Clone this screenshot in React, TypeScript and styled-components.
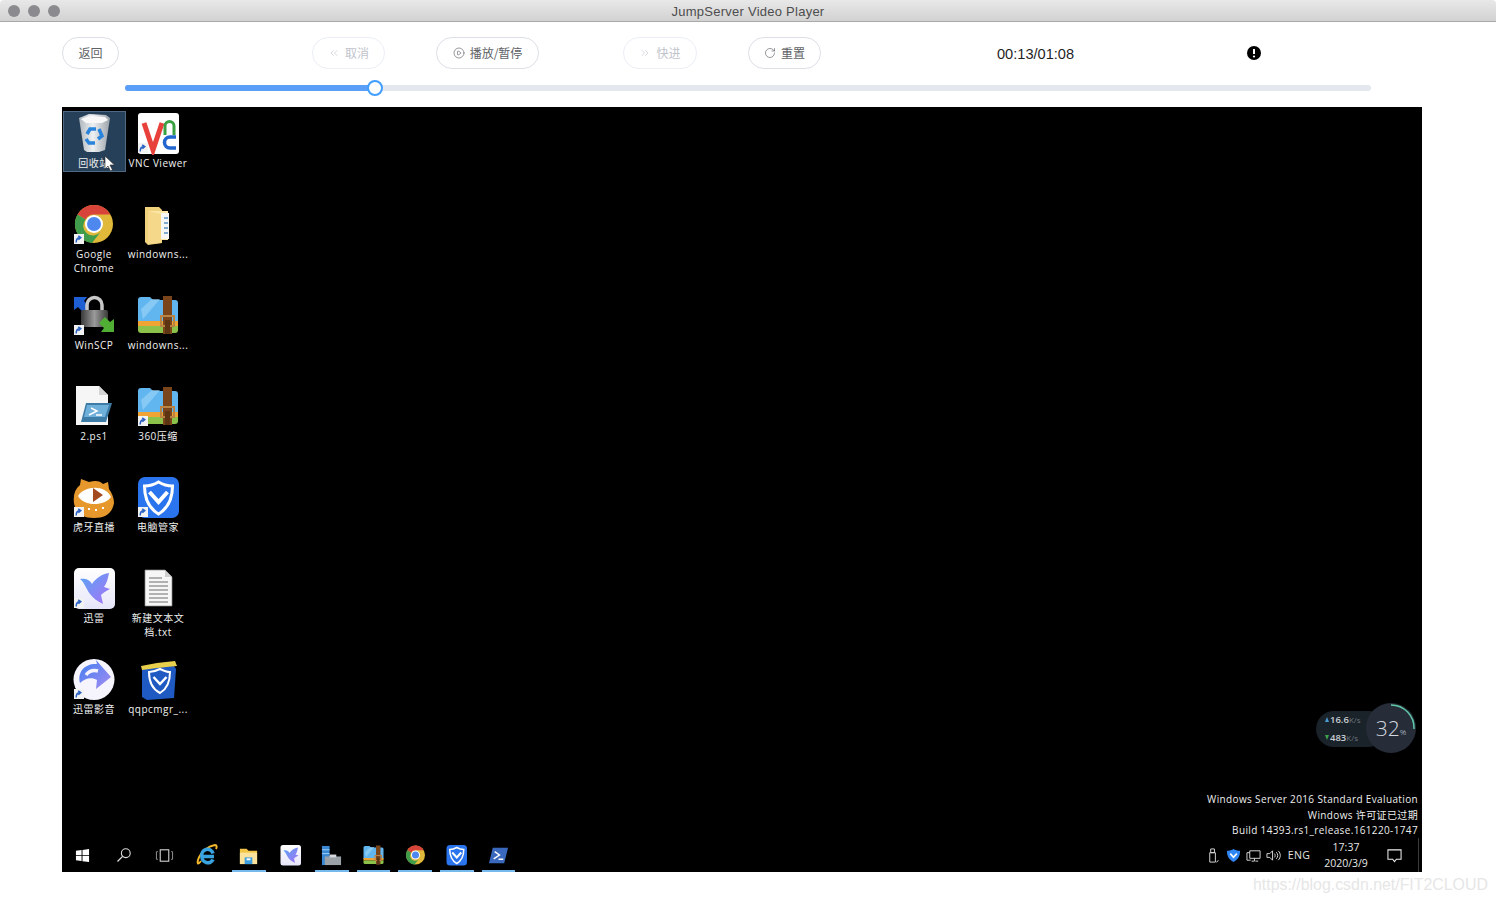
import React from "react";
import styled, { createGlobalStyle } from "styled-components";
import { ChevronsLeft, ChevronsRight, CirclePlay, RotateCw } from "lucide-react";

const Global = createGlobalStyle`
  html, body { margin: 0; padding: 0; background: #fff; }
  body { font-family: "Liberation Sans", "Noto Sans CJK SC", sans-serif; overflow: hidden; }
`;

const Page = styled.div`
  position: relative;
  width: 1496px;
  height: 903px;
  background: #fff;
  overflow: hidden;
`;
const TitleBar = styled.header`
  display: flex;
  align-items: center;
  justify-content: center;
  position: relative;
  height: 21px;
  background: linear-gradient(#e8e8e8, #d2d2d2);
  border-bottom: 1px solid #a9a9a9;
  border-radius: 4px 4px 0 0;
`;
const Lights = styled.div`
  position: absolute;
  left: 8px;
  top: 5px;
  display: flex;
  gap: 8px;
`;
const Light = styled.span`
  width: 12px;
  height: 12px;
  border-radius: 50%;
  background: #8b8b8f;
`;
const WindowTitle = styled.div`
  padding-top: 1px;
  font-size: 13px;
  letter-spacing: 0.25px;
  color: #4d4d4d;
`;
const Toolbar = styled.div`
  display: flex;
  align-items: center;
  height: 32px;
  margin-top: 15px;
  padding-left: 62px;
`;
const RoundButton = styled.button<{ $gap: number; $w: number }>`
  display: flex;
  align-items: center;
  justify-content: center;
  gap: 5px;
  box-sizing: border-box;
  width: ${(p) => p.$w}px;
  height: 32px;
  margin-left: ${(p) => p.$gap}px;
  padding: 0 0 1px;
  background: #fff;
  border: 1px solid ${(p) => (p.disabled ? "#ebeef5" : "#dcdfe6")};
  border-radius: 16px;
  color: ${(p) => (p.disabled ? "#c0c4cc" : "#606266")};
  font: 12px/14px "Noto Sans CJK SC", sans-serif;
`;
const TimeText = styled.div`
  margin-left: 176px;
  width: 78px;
  padding-top: 2px;
  font: 14.6px "Liberation Sans", sans-serif;
  white-space: nowrap;
  color: #1f1f1f;
`;
const Alert = styled.svg`
  width: 14px;
  height: 14px;
  margin-left: 172px;
`;
const SliderRow = styled.div`
  position: relative;
  width: 1246px;
  height: 6px;
  margin: 16px 0 16px 125px;
  background: #e4e7ed;
  border-radius: 3px;
`;
const SliderFill = styled.div`
  height: 100%;
  background: #5a9ef8;
  border-radius: 3px 0 0 3px;
`;
const SliderThumb = styled.div`
  position: absolute;
  top: -5px;
  width: 16px;
  height: 16px;
  box-sizing: border-box;
  margin-left: -8px;
  background: #fff;
  border: 2px solid #409eff;
  border-radius: 50%;
`;
const Desktop = styled.main`
  position: relative;
  display: flex;
  flex-direction: column;
  width: 1360px;
  height: 765px;
  margin-left: 62px;
  background: #000;
  color: #f2f2f2;
  overflow: hidden;
`;
const IconGrid = styled.div`
  flex: 1;
  display: grid;
  grid-template-columns: repeat(2, 64px);
  grid-auto-rows: 91px;
  align-content: start;
  padding-top: 6px;
`;
const DesktopItem = styled.div<{ $selected?: boolean }>`
  position: relative;
  display: flex;
  flex-direction: column;
  align-items: center;
  &::before {
    content: "";
    display: ${(p) => (p.$selected ? "block" : "none")};
    position: absolute;
    left: 1px;
    right: 0;
    top: -2px;
    height: 61px;
    box-sizing: border-box;
    background: #26405a;
    border: 1px solid #4f6a82;
  }
`;
const IconBox = styled.div`
  position: relative;
  width: 42px;
  height: 42px;
  svg { display: block; width: 100%; height: 100%; }
`;
const ItemLabel = styled.div`
  position: relative;
  margin-top: 1px;
  width: 64px;
  text-align: center;
  font: 10px/14px "Open Sans", "Noto Sans CJK SC", sans-serif;
  letter-spacing: 0.5px;
  color: #f0f0f0;
  white-space: pre-line;
`;
const Cursor = styled.svg`
  position: absolute;
  left: 42px;
  top: 42px;
  width: 12px;
  height: 17px;
`;
const Widget = styled.div`
  position: absolute;
  right: 6px;
  top: 596px;
  width: 100px;
  height: 50px;
`;
const WidgetPill = styled.div`
  position: absolute;
  left: 0;
  top: 8px;
  width: 70px;
  height: 36px;
  border-radius: 18px;
  background: #1a222a;
  display: flex;
  flex-direction: column;
  justify-content: space-around;
  padding: 0 0 0 9px;
  box-sizing: border-box;
`;
const Rate = styled.div<{ $c: string }>`
  font: 600 9.5px/12px "Open Sans", sans-serif;
  color: #c9ced3;
  white-space: nowrap;
  &::before {
    content: "";
    display: inline-block;
    vertical-align: 1px;
    margin-right: 1px;
    border-left: 2.5px solid transparent;
    border-right: 2.5px solid transparent;
    ${(p) => (p.$c === "up" ? "border-bottom: 5px solid #4a9bd0;" : "border-top: 5px solid #3da24b;")}
  }
  small { font-size: 8px; font-weight: 400; color: #6c747c; }
`;
const WidgetDial = styled.div`
  position: absolute;
  right: 0;
  top: 0;
  width: 50px;
  height: 50px;
  border-radius: 50%;
  background: #262d38;
  display: flex;
  align-items: center;
  justify-content: center;
  font: 300 21px "Open Sans", sans-serif;
  color: #d5dae0;
  svg { position: absolute; inset: 0; width: 50px; height: 50px; }
  small { font-size: 8px; margin-top: 7px; }
`;
const License = styled.div`
  position: absolute;
  right: 4px;
  bottom: 33px;
  text-align: right;
  font: 10px/15.7px "Open Sans", "Noto Sans CJK SC", sans-serif;
  letter-spacing: 0.36px;
  color: #eeeeee;
`;
const Taskbar = styled.footer`
  display: flex;
  align-items: stretch;
  height: 34px;
  background: #000;
`;
const Slot = styled.div<{ $active?: boolean; $size?: number; $w?: number }>`
  position: relative;
  display: flex;
  align-items: center;
  justify-content: center;
  width: ${(p) => p.$w ?? 41.6}px;
  svg { display: block; width: ${(p) => p.$size ?? 21}px; height: ${(p) => p.$size ?? 21}px; }
  &::after {
    content: "";
    display: ${(p) => (p.$active ? "block" : "none")};
    position: absolute;
    left: 4px;
    right: 4px;
    bottom: 0;
    height: 2px;
    background: #76b9ed;
  }
`;
const Tray = styled.div`
  margin-left: auto;
  display: flex;
  align-items: center;
  padding-right: 3px;
`;
const TrayIcon = styled.div`
  display: flex;
  justify-content: center;
  width: 20.2px;
  svg { display: block; width: 15px; height: 15px; }
`;
const Lang = styled.div`
  width: 30px;
  text-align: center;
  font: 10.5px "Open Sans", sans-serif;
  letter-spacing: 0.3px;
  color: #e4e4e4;
`;
const Clock = styled.div`
  width: 64px;
  text-align: center;
  font: 10.5px/16px "Open Sans", sans-serif;
  color: #e8e8e8;
`;
const NotifySlot = styled.div`
  display: flex;
  justify-content: center;
  width: 32px;
  svg { width: 15px; height: 15px; }
`;
const TrayDivider = styled.div`
  width: 1px;
  height: 34px;
  margin-left: 8px;
  background: #3c3c3c;
`;
const Watermark = styled.div`
  position: absolute;
  left: 1253px;
  top: 875px;
  font: 15.9px/20px "Liberation Sans", sans-serif;
  color: #e6e6e6;
  white-space: nowrap;
`;

const Shortcut = () => (
  <g>
    <rect x="1" y="30" width="10" height="10" fill="#f2f2f2" />
    <path d="M3.2 38.5c0-3 1.2-4.7 3.6-4.9M5.2 31.8l2.6 1.8-2.4 2.2" stroke="#2b62c4" strokeWidth="1.5" fill="none" />
  </g>
);
const RecycleIcon = () => (
  <svg viewBox="0 0 42 42">
    <defs>
      <linearGradient id="rb" x1="0" x2="1" y1="0" y2="0">
        <stop offset="0" stopColor="#aeb6bc" />
        <stop offset=".45" stopColor="#eef1f3" />
        <stop offset="1" stopColor="#9aa1a8" />
      </linearGradient>
    </defs>
    <path d="M6 5l10-4 17 1 4 3-5 32-6 2H14l-3-2z" fill="url(#rb)" />
    <path d="M8 6l8-3 16 1 3 3-6 3-16 0z" fill="#f8f8f8" />
    <path d="M14 21l3-5 6 0M26 16l3 7-4 3M22 30h-6l-3-4" stroke="#2a84dc" strokeWidth="3.500" fill="none" />
  </svg>
);
const VncIcon = () => (
  <svg viewBox="0 0 42 42">
    <rect x="1" width="41" height="41" rx="3" fill="#fff" />
    <path d="M7 10l9 27 9-27" stroke="#e8403a" strokeWidth="5" fill="none" />
    <path d="M28 22v-9a4.500 4.500 0 0 1 9 0v9" stroke="#3aa043" strokeWidth="3" fill="none" />
    <path d="M39 24h-6a5.500 5.500 0 0 0 0 11h6" stroke="#2266d0" strokeWidth="3.500" fill="none" />
    <Shortcut />
  </svg>
);
const ChromeIcon = ({ short = true }: { short?: boolean }) => (
  <svg viewBox="0 0 42 42">
    <circle cx="21" cy="20" r="19" fill="#e0b93a" />
    <path d="M4.500 10.500A19 19 0 0 1 37.500 10.500H21a9.500 9.500 0 0 0-8.500 5z" fill="#d8443a" />
    <path d="M4.500 10.500A19 19 0 0 0 19 39l8.500-11a9.500 9.500 0 0 1-15-12.500z" fill="#3f9c4a" />
    <circle cx="21" cy="20" r="9" fill="#fff" />
    <circle cx="21" cy="20" r="7" fill="#4e88ee" />
    {short && <Shortcut />}
  </svg>
);
const FolderIcon = () => (
  <svg viewBox="0 0 42 42">
    <path d="M8 3h14l3 3v33l-14 2-3-3z" fill="#f0d27c" />
    <path d="M11 7h20v29H11z" fill="#fbe7a5" />
    <path d="M24 9h8v26h-8z" fill="#f6f6f4" />
    <path d="M27 14h4M27 19h4M27 24h4M27 29h4" stroke="#7fa9cf" strokeWidth="2" />
    <path d="M11 7l13 3v29l-13 1z" fill="#f5d88a" />
  </svg>
);
const ScpIcon = () => (
  <svg viewBox="0 0 42 42">
    <defs>
      <linearGradient id="lk" x1="0" x2="1" y1="0" y2="0">
        <stop offset="0" stopColor="#3a3a3a" />
        <stop offset=".5" stopColor="#9a9a9a" />
        <stop offset="1" stopColor="#3a3a3a" />
      </linearGradient>
    </defs>
    <path d="M1 2h13l-3 4 5 5-6 6-5-5-4 3z" fill="#1f5fd4" />
    <path d="M14 15v-5a7.500 7.500 0 0 1 15 0v5" stroke="#c8c8c8" strokeWidth="3.500" fill="none" />
    <rect x="8" y="15" width="27" height="17" rx="2" fill="url(#lk)" />
    <path d="M41 37H28l3-4-5-5 6-6 5 5 4-3z" fill="#4fae33" />
    <Shortcut />
  </svg>
);
const RarIcon = ({ short }: { short?: boolean }) => (
  <svg viewBox="0 0 42 42">
    <path d="M1 5a3 3 0 0 1 3-3h9l3 3h22a3 3 0 0 1 3 3v20H1z" fill="#62b6ef" />
    <path d="M4 14l11-10h8L6 24z" fill="#96d1f6" opacity=".7" />
    <path d="M1 26h40v5H1z" fill="#f0a434" />
    <path d="M1 31h40v4a3 3 0 0 1-3 3H4a3 3 0 0 1-3-3z" fill="#8cc24a" />
    <rect x="26" y="1" width="9" height="38" fill="#7a451a" />
    <rect x="24" y="21" width="13" height="10" fill="none" stroke="#b98344" strokeWidth="2" />
    <rect x="28" y="25" width="5" height="14" fill="#5d3412" />
    {short && <Shortcut />}
  </svg>
);
const PsFileIcon = () => (
  <svg viewBox="0 0 42 42">
    <path d="M3 0h23l9 9v30H3z" fill="#f6f6f6" />
    <path d="M26 0v9h9z" fill="#d4d4d4" />
    <path d="M13 17h26l-6 19H8z" fill="#3e7ca8" />
    <path d="M14 19h22l-4 12H11z" fill="#6fb0da" />
    <path d="M18 22l6 3-8 4M23 29h6" stroke="#fff" strokeWidth="1.500" fill="none" />
  </svg>
);
const HuyaIcon = () => (
  <svg viewBox="0 0 42 42">
    <path d="M1 26c-1-8 1-14 6-18l1-6 8 3c7-2 11-1 14 2l5-2 1 7c3 4 5 9 5 14-2 11-9 15-20 15-11 0-18-4-20-15z" fill="#e7982c" />
    <path d="M5 19c6-10 27-12 33 1-6 9-27 10-33-1z" fill="#fff" />
    <path d="M20 11l10 7-10 7z" fill="#a34a1e" />
    <path d="M15 32h2M22 33h2M29 31h2" stroke="#fff" strokeWidth="2" fill="none" />
    <Shortcut />
  </svg>
);
const ShieldIcon = ({ short = true }: { short?: boolean }) => (
  <svg viewBox="0 0 42 42">
    <rect x="1" width="41" height="41" rx="7" fill="#2a74ee" />
    <path d="M21.500 5c5 3 9 4 14 4 0 13-4 22-14 28-10-6-14-15-14-28 5 0 9-1 14-4z" stroke="#fff" strokeWidth="3" fill="none" />
    <path d="M12.500 15l9 10 9-10" stroke="#fff" strokeWidth="4" fill="none" />
    {short && <Shortcut />}
  </svg>
);
const BirdIcon = ({ short = true }: { short?: boolean }) => (
  <svg viewBox="0 0 42 42">
    <defs>
      <linearGradient id="bd" x1="0" x2="1" y1="0" y2="1">
        <stop offset="0" stopColor="#58a6f4" />
        <stop offset="1" stopColor="#a772f6" />
      </linearGradient>
      <linearGradient id="bg" x1="0" x2="0" y1="0" y2="1">
        <stop offset="0" stopColor="#fff" />
        <stop offset="1" stopColor="#e6e6fa" />
      </linearGradient>
    </defs>
    <rect x="1" width="41" height="41" rx="5" fill="url(#bg)" />
    <path d="M7 11c6-1 10 1 12 5 4-6 10-10 17-11-1 5-2 10-5 14l6 2c-4 2-7 4-9 6l2 9c-6-3-10-6-13-10-4-5-5-11-10-15z" fill="url(#bd)" />
    {short && <Shortcut />}
  </svg>
);
const TextFileIcon = () => (
  <svg viewBox="0 0 42 42">
    <path d="M8 2h20l7 7v29H8z" fill="#f6f6f6" stroke="#8a8a8a" strokeWidth=".7" />
    <path d="M28 2v7h7z" fill="#cfcfcf" />
    <path d="M12 10h13M12 14h19M12 18h19M12 22h19M12 26h19M12 30h19M12 34h19" stroke="#9a9a9a" strokeWidth="1.400" />
  </svg>
);
const PlayerIcon = () => (
  <svg viewBox="0 0 42 42">
    <defs>
      <linearGradient id="pl" x1="0" x2="1" y1="0" y2="1">
        <stop offset="0" stopColor="#3f7df0" />
        <stop offset="1" stopColor="#a58df2" />
      </linearGradient>
    </defs>
    <circle cx="21" cy="20.500" r="20.500" fill="#f6f4fd" />
    <path d="M7 24C4 12 13 4 24 5L23 1l15 17-15 12 1-9c-5-3-12-2-17 3z" fill="url(#pl)" />
    <path d="M13 16c3-4 8-5 12-4" stroke="#f6f4fd" strokeWidth="3.500" fill="none" />
    <Shortcut />
  </svg>
);
const BoxIcon = () => (
  <svg viewBox="0 0 42 42">
    <path d="M5 9l32-2 2 3-2 29-27 2-5-3z" fill="#1f59c2" />
    <path d="M4 7l16-3 18-2 2 5-20 2-15 2z" fill="#e8cf4c" />
    <path d="M23 10c4 2 7 3 10 3 0 10-3 17-10 21-8-4-11-11-11-21 4 0 7-1 11-3z" stroke="#fff" strokeWidth="2" fill="none" />
    <path d="M16.500 18l6.500 7 6.500-7" stroke="#fff" strokeWidth="2.500" fill="none" />
  </svg>
);
const WinIcon = () => (
  <svg viewBox="0 0 16 16">
    <path d="M1 3l6-.9V7.600H1zM8 2l7-1v6.600H8zM1 8.400h6v5.500l-6-.9zM8 8.400h7V15l-7-1z" fill="#fff" />
  </svg>
);
const SearchIcon = () => (
  <svg viewBox="0 0 16 16">
    <circle cx="9.800" cy="6.200" r="4.400" stroke="#ddd" strokeWidth="1.100" fill="none" />
    <path d="M6.600 9.400L1.500 14.500" stroke="#ddd" strokeWidth="1.300" />
  </svg>
);
const ViewIcon = () => (
  <svg viewBox="0 0 20 16">
    <rect x="5.500" y="2" width="9" height="12" stroke="#ddd" strokeWidth="1.100" fill="none" />
    <path d="M3 4H1.500v8H3M17 4h1.500v8H17" stroke="#999" strokeWidth="1" fill="none" />
  </svg>
);
const IeIcon = () => (
  <svg viewBox="0 0 22 22">
    <path d="M5 17C2 21 1 20 2 16 4 9 12 2 19 1c2 0 2 2 1 4" stroke="#f0b72c" strokeWidth="2" fill="none" />
    <path d="M18 12.500H6a5.500 5.500 0 0 1 11-3M6 12.500a5.800 5.800 0 0 0 11 3" stroke="#38a3e0" strokeWidth="3.600" fill="none" />
  </svg>
);
const ExplorerIcon = () => (
  <svg viewBox="0 0 22 22">
    <path d="M2 4h7l2 2h9v14H2z" fill="#f2c544" />
    <path d="M2 8h18v12H2z" fill="#fbe39b" />
    <path d="M7 13h8v7H7z" fill="#3a9ee0" />
    <path d="M9 14h4v2H9z" fill="#fff" />
  </svg>
);
const ServerIcon = () => (
  <svg viewBox="0 0 22 22">
    <rect x="1" y="1" width="8" height="20" fill="#3a88d4" />
    <path d="M1 5h8M1 9h8" stroke="#9fd0f4" strokeWidth="1" />
    <rect x="4" y="12" width="17" height="9" fill="#9aa2a8" />
    <rect x="9" y="10" width="7" height="3" fill="#d6dade" />
  </svg>
);
const PsIcon = () => (
  <svg viewBox="0 0 22 22">
    <path d="M5 3h16l-4 16H1z" fill="#3a68bc" />
    <path d="M7 7l5 3.500-6 4M11 15h5" stroke="#fff" strokeWidth="1.500" fill="none" />
  </svg>
);
const UsbIcon = () => (
  <svg viewBox="0 0 16 16">
    <path d="M5 1h4v4H5zM4 5h6v10H4zM11 15c1 0 2-1 2-2" stroke="#ddd" fill="none" />
  </svg>
);
const TrayShield = () => (
  <svg viewBox="0 0 16 16">
    <path d="M8 1c2 1 4 2 7 2 0 6-2 9-7 12C3 12 1 9 1 3c3 0 5-1 7-2z" fill="#2f86f2" />
    <path d="M4.500 6L8 10l3.500-4" stroke="#fff" strokeWidth="1.700" fill="none" />
  </svg>
);
const NetIcon = () => (
  <svg viewBox="0 0 16 16">
    <path d="M4 3h11v8H4zM9 11v3H6M10 14h3M1 5h3M1 5v8h4" stroke="#ddd" fill="none" />
  </svg>
);
const SpeakerIcon = () => (
  <svg viewBox="0 0 16 16">
    <path d="M1 6h3l3-3v10l-3-3H1zM9 6c1 1 1 3 0 4M11 4.500c2 2 2 5 0 7M13 3c3 3 3 7 0 10" stroke="#ddd" fill="none" />
  </svg>
);
const NotifyIcon = () => (
  <svg viewBox="0 0 16 16">
    <path d="M1 2h14v10h-5l-2 2.500L6 12H1z" stroke="#eee" strokeWidth="1.100" fill="none" />
  </svg>
);

const items: { label: string; Icon: React.ComponentType; selected?: boolean }[] = [
  { label: "回收站", Icon: RecycleIcon, selected: true },
  { label: "VNC Viewer", Icon: VncIcon },
  { label: "Google\nChrome", Icon: ChromeIcon as React.ComponentType },
  { label: "windowns...", Icon: FolderIcon },
  { label: "WinSCP", Icon: ScpIcon },
  { label: "windowns...", Icon: RarIcon as React.ComponentType },
  { label: "2.ps1", Icon: PsFileIcon },
  { label: "360压缩", Icon: () => <RarIcon short /> },
  { label: "虎牙直播", Icon: HuyaIcon },
  { label: "电脑管家", Icon: ShieldIcon as React.ComponentType },
  { label: "迅雷", Icon: BirdIcon as React.ComponentType },
  { label: "新建文本文\n档.txt", Icon: TextFileIcon },
  { label: "迅雷影音", Icon: PlayerIcon },
  { label: "qqpcmgr_...", Icon: BoxIcon },
];

const progress = (250 / 1246) * 100;

export default function App() {
  return (
    <Page>
      <Global />
      <TitleBar>
        <Lights>
          <Light />
          <Light />
          <Light />
        </Lights>
        <WindowTitle>JumpServer Video Player</WindowTitle>
      </TitleBar>
      <Toolbar>
        <RoundButton $gap={0} $w={57}>返回</RoundButton>
        <RoundButton $gap={193} $w={73} disabled>
          <ChevronsLeft size={12} strokeWidth={1.3} />取消
        </RoundButton>
        <RoundButton $gap={51} $w={103}>
          <CirclePlay size={12} strokeWidth={1.3} />播放/暂停
        </RoundButton>
        <RoundButton $gap={84} $w={74} disabled>
          <ChevronsRight size={12} strokeWidth={1.3} />快进
        </RoundButton>
        <RoundButton $gap={51} $w={73}>
          <RotateCw size={12} strokeWidth={1.3} />重置
        </RoundButton>
        <TimeText>00:13/01:08</TimeText>
        <Alert viewBox="0 0 14 14">
          <circle cx="7" cy="7" r="7" fill="#000" />
          <path d="M7 3v5" stroke="#fff" strokeWidth="2" />
          <circle cx="7" cy="10.500" r="1.100" fill="#fff" />
        </Alert>
      </Toolbar>
      <SliderRow>
        <SliderFill style={{ width: `${progress}%` }} />
        <SliderThumb style={{ left: `${progress}%` }} />
      </SliderRow>
      <Desktop>
        <IconGrid>
          {items.map(({ label, Icon, selected }, i) => (
            <DesktopItem key={i} $selected={selected}>
              <IconBox>
                <Icon />
              </IconBox>
              <ItemLabel>{label}</ItemLabel>
              {selected && (
                <Cursor viewBox="0 0 12 17">
                  <path d="M1 1v13l3-3 2.500 5 2-1-2.500-5h4.500z" fill="#fff" stroke="#222" strokeWidth=".6" />
                </Cursor>
              )}
            </DesktopItem>
          ))}
        </IconGrid>
        <Widget>
          <WidgetPill>
            <Rate $c="up">16.6<small>K/s</small></Rate>
            <Rate $c="down">483<small>K/s</small></Rate>
          </WidgetPill>
          <WidgetDial>
            <svg viewBox="0 0 50 50">
              <path d="M25 2a23 23 0 0 1 23 24" stroke="#5fc9a8" strokeWidth="1.500" fill="none" />
            </svg>
            32<small>%</small>
          </WidgetDial>
        </Widget>
        <License>
          Windows Server 2016 Standard Evaluation
          <br />
          Windows 许可证已过期
          <br />
          Build 14393.rs1_release.161220-1747
        </License>
        <Taskbar>
          <Slot $w={41} $size={15}><WinIcon /></Slot>
          <Slot $w={41} $size={16}><SearchIcon /></Slot>
          <Slot $w={41} $size={19}><ViewIcon /></Slot>
          <Slot $w={43} $size={22}><IeIcon /></Slot>
          <Slot $active><ExplorerIcon /></Slot>
          <Slot><BirdIcon short={false} /></Slot>
          <Slot $active><ServerIcon /></Slot>
          <Slot $active><RarIcon /></Slot>
          <Slot $active><ChromeIcon short={false} /></Slot>
          <Slot $active><ShieldIcon short={false} /></Slot>
          <Slot $active><PsIcon /></Slot>
          <Tray>
            <TrayIcon><UsbIcon /></TrayIcon>
            <TrayIcon><TrayShield /></TrayIcon>
            <TrayIcon><NetIcon /></TrayIcon>
            <TrayIcon><SpeakerIcon /></TrayIcon>
            <Lang>ENG</Lang>
            <Clock>17:37<br />2020/3/9</Clock>
            <NotifySlot><NotifyIcon /></NotifySlot>
            <TrayDivider />
          </Tray>
        </Taskbar>
      </Desktop>
      <Watermark>https://blog.csdn.net/FIT2CLOUD</Watermark>
    </Page>
  );
}
